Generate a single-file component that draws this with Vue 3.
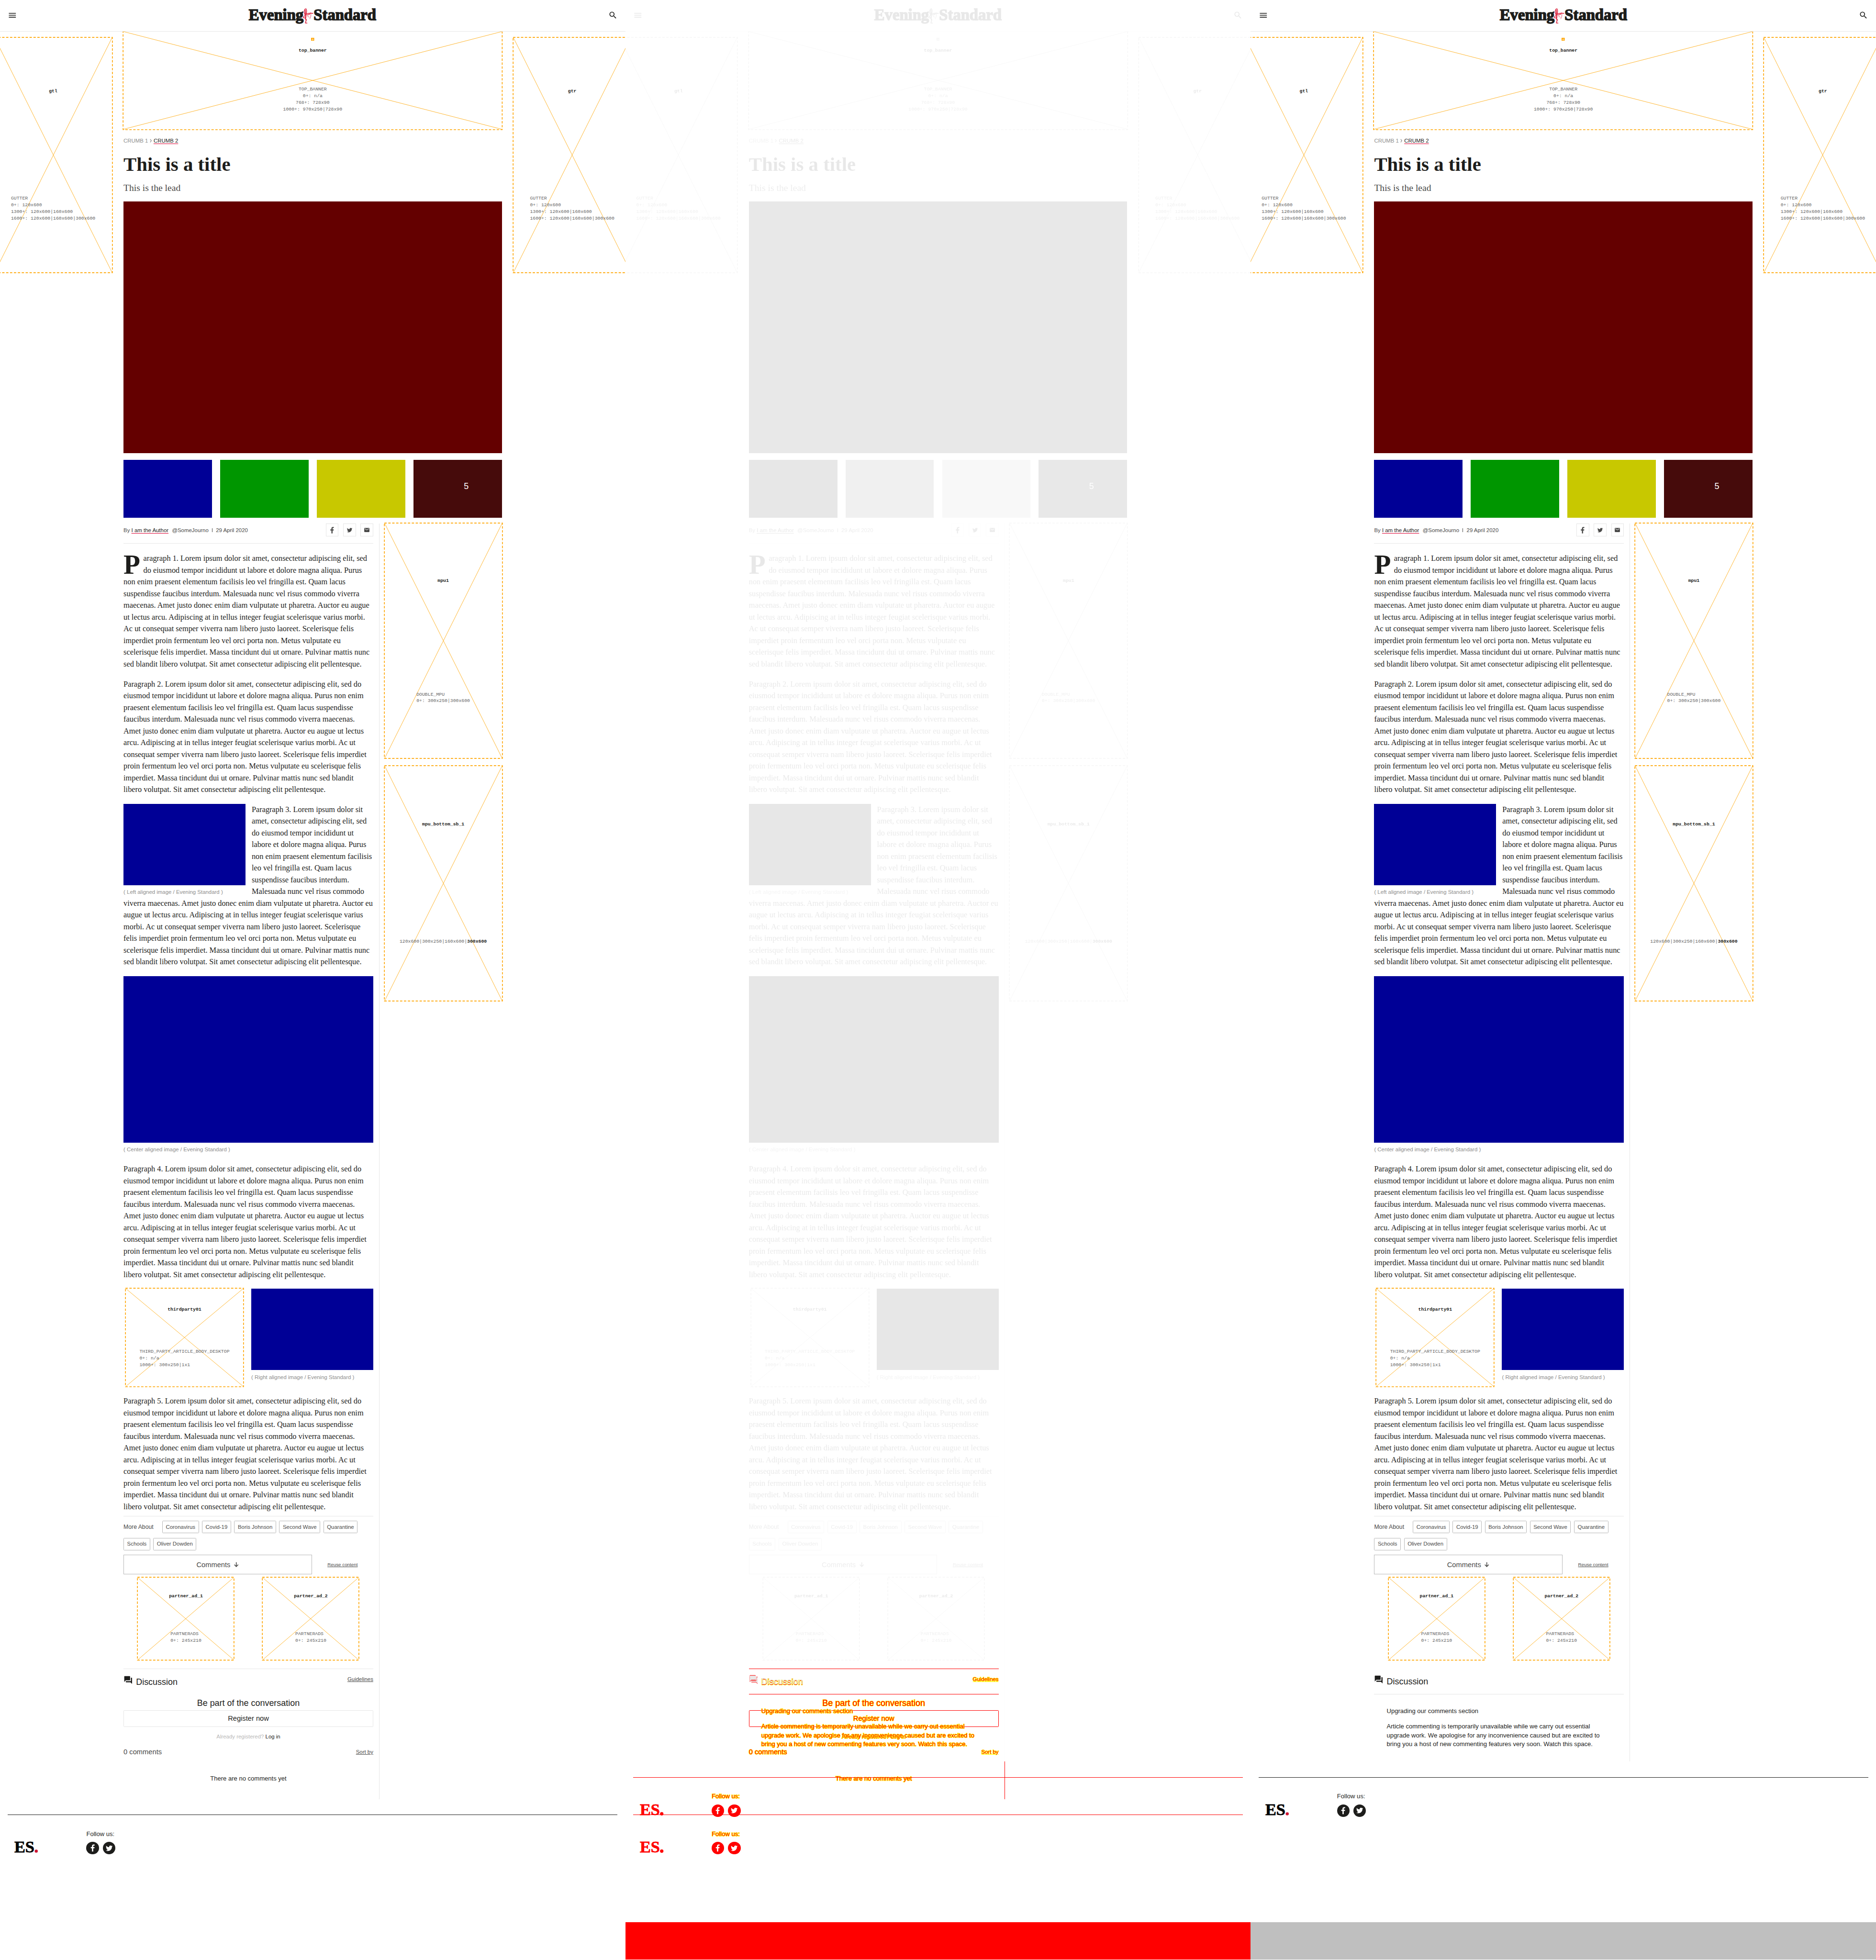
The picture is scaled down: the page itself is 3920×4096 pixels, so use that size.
<script setup>
const panes = [
  { id: 'before', label: 'Before', layers: ['before'] },
  { id: 'diff', label: 'Difference', layers: ['before', 'after'] },
  { id: 'after', label: 'After', layers: ['after'] },
]

const gutterSizes = ['GUTTER', '0+: 120x600', '1300+: 120x600|160x600', '1600+: 120x600|160x600|300x600']
const bannerSizes = ['TOP_BANNER', '0+: n/a', '768+: 728x90', '1000+: 970x250|728x90']
const thirdPartySizes = ['THIRD_PARTY_ARTICLE_BODY_DESKTOP', '0+: n/a', '1000+: 300x250|1x1']

const lorem =
  'Lorem ipsum dolor sit amet, consectetur adipiscing elit, sed do eiusmod tempor incididunt ut labore et dolore magna aliqua. Purus non enim praesent elementum facilisis leo vel fringilla est. Quam lacus suspendisse faucibus interdum. Malesuada nunc vel risus commodo viverra maecenas. Amet justo donec enim diam vulputate ut pharetra. Auctor eu augue ut lectus arcu. Adipiscing at in tellus integer feugiat scelerisque varius morbi. Ac ut consequat semper viverra nam libero justo laoreet. Scelerisque felis imperdiet proin fermentum leo vel orci porta non. Metus vulputate eu scelerisque felis imperdiet. Massa tincidunt dui ut ornare. Pulvinar mattis nunc sed blandit libero volutpat. Sit amet consectetur adipiscing elit pellentesque.'

const tags = ['Coronavirus', 'Covid-19', 'Boris Johnson', 'Second Wave', 'Quarantine', 'Schools', 'Oliver Dowden']
const partnerAds = ['partner_ad_1', 'partner_ad_2']

const facebookPath = 'M10 21v-8H7V9.800h3V7.300C10 4.500 11.600 3 14.200 3c1.200 0 2.200.1 2.500.1v3h-1.800c-1.300 0-1.600.7-1.600 1.600v2.100h3.300l-.4 3.200h-2.900v8z'
const twitterPath =
  'M22.460 6c-.77.35-1.600.58-2.460.69.88-.53 1.560-1.370 1.880-2.380-.83.5-1.750.85-2.720 1.050C18.370 4.500 17.260 4 16 4c-2.350 0-4.270 1.920-4.270 4.290 0 .34.04.67.11.98C8.280 9.090 5.110 7.380 3 4.790c-.37.63-.58 1.370-.58 2.150 0 1.490.75 2.810 1.910 3.560-.71 0-1.370-.2-1.950-.5v.03c0 2.080 1.480 3.820 3.440 4.210a4.220 4.220 0 0 1-1.930.07 4.280 4.280 0 0 0 4 2.980 8.521 8.521 0 0 1-5.330 1.840c-.34 0-.68-.02-1.020-.06C3.440 20.290 5.700 21 8.120 21 16 21 20.330 14.460 20.330 8.790c0-.19 0-.37-.01-.56.84-.6 1.560-1.360 2.140-2.230z'
</script>

<template>
  <main class="board">
    <section v-for="pane in panes" :key="pane.id" class="pane" :class="'pane-' + pane.id" :aria-label="pane.label">
      <div class="snapshot">
        <header class="masthead">
          <button class="icon-button" type="button" aria-label="Menu">
            <svg width="24" height="24" viewBox="0 0 24 24"><path d="M3 18h18v-2H3v2zm0-5h18v-2H3v2zm0-7v2h18V6H3z" /></svg>
          </button>
          <svg class="logo" width="328" height="44" viewBox="0 0 328 44" role="img" aria-label="Evening Standard">
            <text class="logo-word" x="1" y="34">Evening</text>
            <text class="logo-word" x="167" y="34">Standard</text>
            <g fill="none" stroke="#dc2a44" stroke-linecap="round" stroke-linejoin="round">
              <path stroke-width="2" d="M145 6c-3 4-3 9 0 15M147 5c3 4 2 10 0 15M146 9v9" />
              <path stroke-width="3" d="M146 20l1 7M145 28l3 6" />
              <path stroke-width="2" d="M148 18c5-1 10-2 17-1M149 21c3 0 6 0 8-2M148 34l-2 7M146 42h4M144 23l-4 4 2 2" />
              <path stroke-width="1" d="M159 15c2 5 1 12-2 16M151 24l5 3" />
            </g>
          </svg>
          <button class="icon-button" type="button" aria-label="Search">
            <svg width="24" height="24" viewBox="0 0 24 24"><path d="M15.500 14h-.79l-.28-.27A6.471 6.471 0 0 0 16 9.500 6.500 6.500 0 1 0 9.500 16c1.610 0 3.090-.59 4.230-1.570l.27.28v.79l5 4.990L20.490 19l-4.990-5zm-6 0C7.010 14 5 11.990 5 9.500S7.010 5 9.500 5 14 7.010 14 9.500 11.990 14 9.500 14z" /></svg>
          </button>
        </header>

        <div class="stage">
          <aside class="slot slot-tall slot-gutter">
            <svg class="slot-frame"><line x1="0" y1="0" x2="100%" y2="100%" /><line x1="100%" y1="0" x2="0" y2="100%" /><rect /></svg>
            <strong class="slot-name">gtl</strong>
            <div class="slot-sizes"><div v-for="size in gutterSizes" :key="size">{{ size }}</div></div>
          </aside>

          <div class="column">
            <div class="slot slot-banner">
              <svg class="slot-frame"><line x1="0" y1="0" x2="100%" y2="100%" /><line x1="100%" y1="0" x2="0" y2="100%" /><rect /></svg>
              <svg class="slot-flag" width="8" height="8" viewBox="0 0 8 8"><path d="M0 0h8v8H0z" fill="#ffa500" /><circle cx="4" cy="4" r="1.500" fill="none" stroke="#fff" /></svg>
              <strong class="slot-name">top_banner</strong>
              <div class="slot-sizes"><div v-for="size in bannerSizes" :key="size">{{ size }}</div></div>
            </div>

            <nav class="crumbs" aria-label="Breadcrumb">
              <span>CRUMB 1</span>
              <svg width="6" height="10" viewBox="0 0 6 10"><path d="M1 1l3 4-3 4" fill="none" stroke="currentColor" stroke-width="1.500" /></svg>
              <a class="accent-link" href="#">CRUMB 2</a>
            </nav>
            <h1 class="title">This is a title</h1>
            <p class="lead">This is the lead</p>

            <div class="hero"></div>
            <div class="thumbs">
              <div class="thumb thumb-blue"></div>
              <div class="thumb thumb-green"></div>
              <div class="thumb thumb-yellow"></div>
              <div class="thumb thumb-more">5</div>
            </div>

            <div class="body-row">
              <article class="article">
                <div class="byline">
                  <div class="byline-text">
                    <span>By <a class="accent-link" href="#">I am the Author</a></span>
                    <span>@SomeJourno</span>
                    <i class="byline-bar"></i>
                    <time datetime="2020-04-29">29 April 2020</time>
                  </div>
                  <div class="share">
                    <a class="share-link" href="#" aria-label="Share on Facebook"><svg width="22" height="22" viewBox="0 0 24 24"><path :d="facebookPath" /></svg></a>
                    <a class="share-link" href="#" aria-label="Share on Twitter"><svg width="16" height="16" viewBox="0 0 24 24"><path :d="twitterPath" /></svg></a>
                    <a class="share-link" href="#" aria-label="Share by email"><svg width="16" height="16" viewBox="0 0 24 24"><path d="M20 4H4a2 2 0 0 0-2 2v12c0 1.100.9 2 2 2h16a2 2 0 0 0 2-2V6a2 2 0 0 0-2-2zm0 4l-8 5-8-5V6l8 5 8-5z" /></svg></a>
                  </div>
                </div>

                <p class="para para-first">Paragraph 1. {{ lorem }}</p>
                <p class="para">Paragraph 2. {{ lorem }}</p>
                <div class="wrap">
                  <figure class="figure figure-left">
                    <div class="picture"></div>
                    <figcaption>( Left aligned image / Evening Standard )</figcaption>
                  </figure>
                  <p class="para">Paragraph 3. {{ lorem }}</p>
                </div>
                <figure class="figure figure-center">
                  <div class="picture"></div>
                  <figcaption>( Center aligned image / Evening Standard )</figcaption>
                </figure>
                <p class="para">Paragraph 4. {{ lorem }}</p>
                <div class="pair">
                  <div class="slot slot-box">
                    <svg class="slot-frame"><line x1="0" y1="0" x2="100%" y2="100%" /><line x1="100%" y1="0" x2="0" y2="100%" /><rect /></svg>
                    <strong class="slot-name">thirdparty01</strong>
                    <div class="slot-sizes"><div v-for="size in thirdPartySizes" :key="size">{{ size }}</div></div>
                  </div>
                  <figure class="figure">
                    <div class="picture"></div>
                    <figcaption>( Right aligned image / Evening Standard )</figcaption>
                  </figure>
                </div>
                <p class="para para-last">Paragraph 5. {{ lorem }}</p>

                <div class="tags">
                  <span class="tags-label">More About</span>
                  <a v-for="tag in tags" :key="tag" class="tag" href="#">{{ tag }}</a>
                </div>
                <div class="actions">
                  <button class="comments-button" type="button">
                    Comments
                    <svg width="14" height="14" viewBox="0 0 14 14"><path d="M7 1v11M2 7l5 5 5-5" fill="none" stroke="currentColor" stroke-width="2" /></svg>
                  </button>
                  <a class="reuse" href="#">Reuse content</a>
                </div>
                <div class="partners">
                  <div v-for="ad in partnerAds" :key="ad" class="slot slot-partner">
                    <svg class="slot-frame"><line x1="0" y1="0" x2="100%" y2="100%" /><line x1="100%" y1="0" x2="0" y2="100%" /><rect /></svg>
                    <strong class="slot-name">{{ ad }}</strong>
                    <div class="slot-sizes"><div>PARTNERADS</div><div>0+: 245x210</div></div>
                  </div>
                </div>
              </article>

              <aside class="sidebar">
                <div class="slot slot-tall">
                  <svg class="slot-frame"><line x1="0" y1="0" x2="100%" y2="100%" /><line x1="100%" y1="0" x2="0" y2="100%" /><rect /></svg>
                  <strong class="slot-name">mpu1</strong>
                  <div class="slot-sizes"><div>DOUBLE_MPU</div><div>0+: 300x250|300x600</div></div>
                </div>
                <div class="slot slot-tall">
                  <svg class="slot-frame"><line x1="0" y1="0" x2="100%" y2="100%" /><line x1="100%" y1="0" x2="0" y2="100%" /><rect /></svg>
                  <strong class="slot-name">mpu_bottom_sb_1</strong>
                  <div class="slot-sizes"><div>120x600|300x250|160x600|<b>300x600</b></div></div>
                </div>
              </aside>
            </div>
          </div>

          <aside class="slot slot-tall slot-gutter">
            <svg class="slot-frame"><line x1="0" y1="0" x2="100%" y2="100%" /><line x1="100%" y1="0" x2="0" y2="100%" /><rect /></svg>
            <strong class="slot-name">gtr</strong>
            <div class="slot-sizes"><div v-for="size in gutterSizes" :key="size">{{ size }}</div></div>
          </aside>
        </div>
      </div>

      <div class="tail">
        <div v-for="layer in pane.layers" :key="layer" class="layer" :class="'layer-' + layer">
          <div class="tail-column">
            <section class="discussion">
              <div class="discussion-head">
                <svg class="forum" width="24" height="24" viewBox="0 0 24 24"><path d="M21 6h-2v9H6v2c0 .55.45 1 1 1h11l4 4V7c0-.55-.45-1-1-1zm-4 6V3c0-.55-.45-1-1-1H3c-.55 0-1 .45-1 1v14l4-4h10c.55 0 1-.45 1-1z" /></svg>
                <h2>Discussion</h2>
                <a v-if="layer === 'before'" class="small-link" href="#">Guidelines</a>
              </div>

              <div v-if="layer === 'before'" class="open">
                <h3>Be part of the conversation</h3>
                <button class="register" type="button">Register now</button>
                <p class="login"><span>Already registered?</span> <a href="#">Log in</a></p>
                <div class="count-row">
                  <span class="count">0 comments</span>
                  <button class="small-link" type="button">Sort by</button>
                </div>
                <p class="empty">There are no comments yet</p>
              </div>
              <div v-else class="notice">
                <p>Upgrading our comments section</p>
                <p>Article commenting is temporarily unavailable while we carry out essential upgrade work. We apologise for any inconvenience caused but are excited to bring you a host of new commenting features very soon. Watch this space.</p>
              </div>
            </section>
          </div>

          <footer class="footer">
            <svg class="es" width="64" height="48" viewBox="0 0 64 48" role="img" aria-label="ES.">
              <text class="es-word" x="0" y="39">ES</text>
              <circle class="es-dot" cx="56" cy="36" r="4" />
            </svg>
            <div class="follow">
              <span>Follow us:</span>
              <div class="follow-links">
                <a href="#" aria-label="Facebook"><svg width="24" height="24" viewBox="0 0 24 24"><path :d="facebookPath" /></svg></a>
                <a href="#" aria-label="Twitter"><svg width="20" height="20" viewBox="0 0 24 24"><path :d="twitterPath" /></svg></a>
              </div>
            </div>
          </footer>
          <div v-if="layer === 'after'" class="missing"></div>
        </div>
      </div>
    </section>
  </main>
</template>

<style>
body {
  margin: 0;
  background: #fff;
}
</style>

<style scoped>
.board {
  display: grid;
  grid-template-columns: repeat(3, minmax(0, 1fr));
  zoom: 0.81667;
  font-family: "Liberation Sans", Arial, sans-serif;
  font-size: 14px;
  line-height: 20px;
  color: #1d1d1b;
  background: #fff;
}

h1,
h2,
h3,
p,
figure {
  margin: 0;
}

a {
  color: inherit;
}

button {
  padding: 0;
  border: 0;
  background: none;
  color: inherit;
  font: inherit;
}

svg {
  display: block;
  flex: none;
  fill: currentColor;
}

.pane {
  display: flex;
  flex-direction: column;
  overflow: hidden;
}

.pane-diff .snapshot {
  filter: grayscale(1) opacity(0.1);
}

.masthead {
  position: relative;
  z-index: 1;
  display: flex;
  align-items: center;
  justify-content: space-between;
  height: 79px;
  padding: 0 20px;
  border-bottom: 1px solid #e6e6e6;
  background: #fff;
}

.logo {
  overflow: visible;
}

.logo-word {
  font: bold 40px "Liberation Serif", "Times New Roman", serif;
  stroke: currentColor;
  stroke-width: 2px;
}

.stage {
  display: flex;
  align-items: flex-start;
  justify-content: center;
  gap: 30px;
}

.column {
  flex: none;
  width: 968px;
}

.slot {
  position: relative;
  display: flex;
  flex: none;
  flex-direction: column;
  align-items: center;
  justify-content: space-around;
  font: 12px/17px "Liberation Mono", "Courier New", monospace;
}

.slot-frame {
  position: absolute;
  inset: 0;
  width: 100%;
  height: 100%;
  overflow: visible;
  stroke: #ffa500;
}

.slot-frame rect {
  x: -1px;
  y: -1px;
  width: calc(100% + 2px);
  height: calc(100% + 2px);
  fill: none;
  stroke-width: 2px;
  stroke-dasharray: 6 4;
}

.slot-flag {
  position: absolute;
  top: 16px;
}

.slot-name,
.slot-sizes {
  position: relative;
}

.slot-sizes {
  color: #666;
}

.slot-sizes b {
  color: #1d1d1b;
}

.slot-tall {
  width: 300px;
  height: 600px;
}

.slot-gutter {
  margin-top: 16px;
}

.slot-banner {
  height: 250px;
  text-align: center;
}

.slot-box {
  width: 300px;
  height: 250px;
}

.slot-partner {
  width: 245px;
  height: 210px;
}

.crumbs {
  display: flex;
  align-items: center;
  gap: 4px;
  margin-top: 20px;
  color: #8e8e8d;
}

.accent-link {
  color: #1d1d1b;
  text-decoration: underline #dc0032 1px;
  text-underline-offset: 3px;
}

.title {
  margin-top: 20px;
  font: bold 50px/60px "Liberation Serif", "Times New Roman", serif;
}

.lead {
  margin-top: 16px;
  font: 24px/30px "Liberation Serif", "Times New Roman", serif;
  color: #4a4a49;
}

.hero {
  height: 645px;
  margin-top: 19px;
  background: #640000;
}

.thumbs {
  display: grid;
  grid-template-columns: repeat(4, 1fr);
  gap: 21px;
  margin-top: 16px;
}

.thumb {
  height: 149px;
}

.thumb-blue {
  background: #000096;
}

.thumb-green {
  background: #009600;
}

.thumb-yellow {
  background: #c8c800;
}

.thumb-more {
  display: flex;
  align-items: center;
  justify-content: center;
  box-sizing: border-box;
  padding: 0 0 12px 44px;
  background: #460b0b;
  color: #fff;
  font-size: 22px;
}

.body-row {
  display: flex;
  justify-content: space-between;
  margin-top: 15px;
}

.article {
  width: 639px;
  padding-right: 15px;
  border-right: 1px solid #e6e6e6;
  padding-bottom: 23px;
}

.sidebar {
  display: flex;
  flex-direction: column;
  gap: 20px;
}

.byline {
  display: flex;
  align-items: center;
  justify-content: space-between;
  padding-bottom: 17px;
  border-bottom: 1px solid #e6e6e6;
  margin-bottom: 24px;
}

.byline-text {
  display: flex;
  align-items: center;
  gap: 9px;
  color: #4a4a49;
}

.byline-bar {
  width: 1px;
  height: 10px;
  background: #4a4a49;
}

.share {
  display: flex;
  gap: 12px;
}

.share-link {
  display: flex;
  align-items: center;
  justify-content: center;
  width: 30px;
  height: 30px;
  border: 1px solid #e6e6e6;
  color: #4a4a49;
}

.para {
  margin-bottom: 21px;
  font: 20px/30px "Liberation Serif", "Times New Roman", serif;
}

.para-first::first-letter {
  float: left;
  margin-right: 8px;
  font-size: 70px;
  font-weight: bold;
  line-height: 60px;
}

.para-last {
  margin-bottom: 8px;
}

.figure {
  color: #8e8e8d;
}

.picture {
  height: 208px;
  margin-bottom: 8px;
  background: #000096;
}

.figure-left {
  float: left;
  width: 312px;
  margin-right: 16px;
}

.figure-center {
  margin-bottom: 25px;
}

.figure-center .picture {
  height: 426px;
}

.pair {
  display: grid;
  grid-template-columns: 312px 312px;
  justify-content: space-between;
  justify-items: center;
  margin-bottom: 23px;
}

.pair .figure {
  width: 100%;
}

.tags {
  display: flex;
  flex-wrap: wrap;
  align-items: center;
  gap: 12px 8px;
  padding: 12px 0;
  border-top: 1px solid #e6e6e6;
  color: #4a4a49;
}

.tags-label {
  width: 91px;
  font-size: 15px;
}

.tag {
  padding: 4px 8px 5px;
  border: 1px solid #b8b8b8;
  border-radius: 2px;
  text-decoration: none;
}

.actions {
  display: flex;
  align-items: center;
  color: #4a4a49;
}

.comments-button {
  display: flex;
  align-items: center;
  justify-content: center;
  gap: 8px;
  box-sizing: border-box;
  width: 482px;
  height: 50px;
  border: 1px solid #b8b8b8;
  font-size: 18px;
}

.reuse {
  flex: 1;
  font-size: 12px;
  text-align: center;
}

.partners {
  display: grid;
  grid-template-columns: 1fr 1fr;
  justify-items: center;
  margin-top: 8px;
}

.tail {
  display: grid;
  flex: 1;
}

.layer {
  --ink: #1d1d1b;
  --muted: #4a4a49;
  --pale: #b8b8b8;
  --hairline: #e6e6e6;
  --gap-fill: #bfbfbf;
  grid-area: 1 / 1;
  display: flex;
  flex-direction: column;
  color: var(--ink);
}

.pane-diff .layer {
  --ink: #f00;
  --muted: #f00;
  --pale: #f00;
  --hairline: #f00;
  --gap-fill: #f00;
  -webkit-text-stroke: 2px #ff0;
  paint-order: stroke fill;
}

.tail-column {
  width: 968px;
  margin: 0 auto;
}

.discussion {
  width: 639px;
  padding-right: 15px;
  border-right: 1px solid var(--hairline);
}

.pane-diff .layer-after .discussion {
  border-right-color: #fcfcfc;
}

.discussion-head {
  display: flex;
  align-items: flex-start;
  height: 50px;
  padding-top: 16px;
  box-sizing: border-box;
  height: 66px;
}

.layer-before .discussion-head {
  border-top: 1px solid var(--hairline);
}

.layer-after .discussion-head {
  border-bottom: 1px solid var(--hairline);
}

.discussion-head h2 {
  flex: 1;
  margin: 5px 0 0 8px;
  font-size: 22px;
  font-weight: normal;
  line-height: 26px;
}

.pane-diff .layer-after .discussion-head {
  color: #e8e8e8;
  -webkit-text-stroke: 0;
}

.pane-diff .layer-after .forum {
  filter: drop-shadow(0 -1px 0 #f00);
}

.small-link {
  color: var(--muted);
  text-decoration: underline;
}

.open {
  display: flex;
  flex-direction: column;
  padding: 10px 0 40px;
  text-align: center;
}

.open h3 {
  font-size: 22px;
  font-weight: normal;
  line-height: 26px;
}

.register {
  height: 44px;
  margin-top: 4px;
  border: 1px solid var(--hairline);
  border-radius: 2px;
  font-size: 18px;
}

.login {
  margin-top: 14px;
}

.login span {
  color: var(--pale);
}

.login a {
  text-decoration: none;
}

.count-row {
  display: flex;
  align-items: center;
  justify-content: space-between;
  margin-top: 18px;
  line-height: 24px;
}

.count {
  color: var(--muted);
  font-size: 18px;
}

.empty {
  margin-top: 44px;
  font-size: 16px;
  line-height: 24px;
}

.notice {
  display: flex;
  flex-direction: column;
  gap: 16px;
  padding: 32px;
  font-size: 16px;
  line-height: 23px;
}

.footer {
  display: flex;
  align-items: flex-start;
  box-sizing: border-box;
  min-height: 371px;
  margin: 40px 20px 0;
  padding: 36px 17px 0;
  border-top: 1px solid var(--ink);
  font-size: 16px;
  line-height: 24px;
}

.es {
  margin-top: 20px;
  overflow: visible;
}

.es-word {
  font: bold 42px "Liberation Serif", "Times New Roman", serif;
  fill: #000;
  stroke: #000;
  stroke-width: 1px;
}

.es-dot {
  fill: #cd1632;
}

.pane-diff .es-word,
.pane-diff .es-dot {
  fill: #f00;
  stroke: #f00;
  -webkit-text-stroke: 0;
}

.follow {
  margin-left: 120px;
}

.follow-links {
  display: flex;
  gap: 10px;
  margin-top: 8px;
}

.follow-links a {
  display: flex;
  align-items: center;
  justify-content: center;
  width: 32px;
  height: 32px;
  border-radius: 50%;
  background: var(--ink);
  color: #fff;
}

.missing {
  flex: 1;
  background: var(--gap-fill);
}
</style>
